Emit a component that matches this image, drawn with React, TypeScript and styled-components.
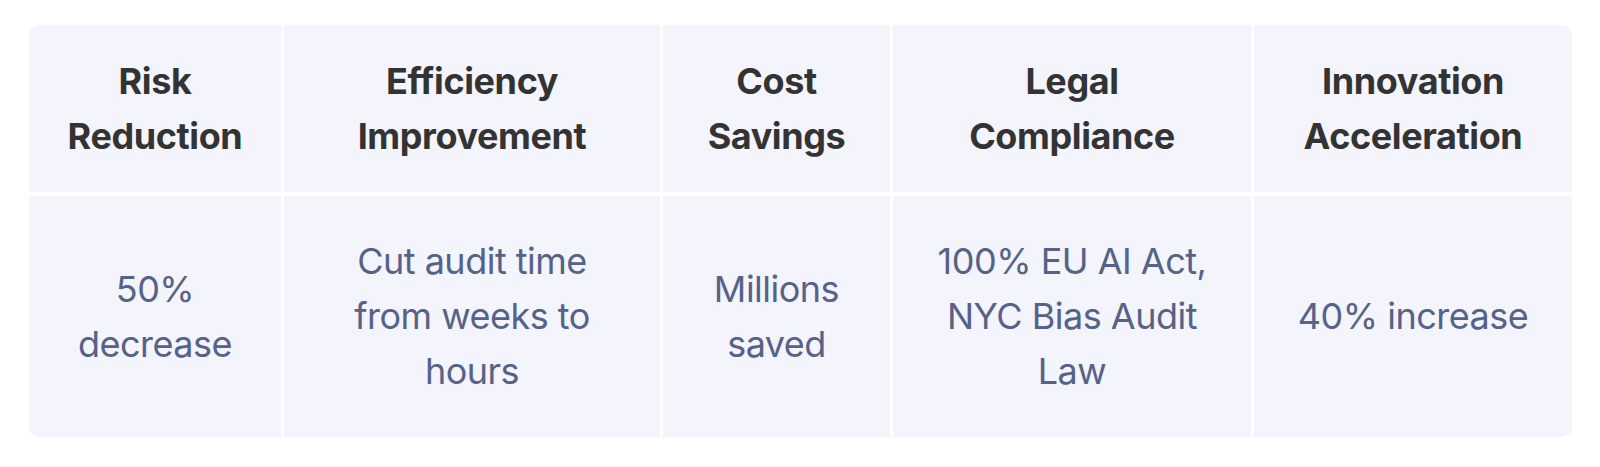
import React from "react";
import styled, { createGlobalStyle } from "styled-components";

const GlobalStyle = createGlobalStyle`
  body {
    margin: 0;
    background: #ffffff;
    font-family: Inter, "Liberation Sans", sans-serif;
  }
`;

interface Metric {
  title: string;
  value: string;
  width: number;
}

const metrics: Metric[] = [
  { title: "Risk Reduction", value: "50% decrease", width: 252 },
  { title: "Efficiency Improvement", value: "Cut audit time from weeks to hours", width: 376 },
  { title: "Cost Savings", value: "Millions saved", width: 227 },
  { title: "Legal Compliance", value: "100% EU AI Act, NYC Bias Audit Law", width: 358 },
  { title: "Innovation Acceleration", value: "40% increase", width: 318 },
];

const Page = styled.div`
  padding: 25px 27px 30px 29px;
`;

const Table = styled.div<{ $columns: string }>`
  display: grid;
  grid-template-columns: ${(p) => p.$columns};
  grid-template-rows: 167px 241px;
  column-gap: 3px;
  row-gap: 4px;
  width: max-content;
  border-radius: 10px;
  overflow: hidden;
`;

const Cell = styled.div`
  display: flex;
  align-items: center;
  justify-content: center;
  padding: 0 32px;
  background: #f3f4fc;
  text-align: center;
  font-size: 36px;
  line-height: 55px;
`;

const HeadCell = styled(Cell)`
  color: #333333;
  font-weight: 700;
  letter-spacing: -0.4px;
`;

const BodyCell = styled(Cell)`
  color: #566287;
  font-weight: 400;
  letter-spacing: -0.5px;
`;

const App: React.FC = () => {
  const columns = metrics.map((m) => `${m.width}px`).join(" ");
  return (
    <>
      <GlobalStyle />
      <Page>
        <Table $columns={columns}>
          {metrics.map((m) => (
            <HeadCell key={m.title}>{m.title}</HeadCell>
          ))}
          {metrics.map((m) => (
            <BodyCell key={m.value}>{m.value}</BodyCell>
          ))}
        </Table>
      </Page>
    </>
  );
};

export default App;
